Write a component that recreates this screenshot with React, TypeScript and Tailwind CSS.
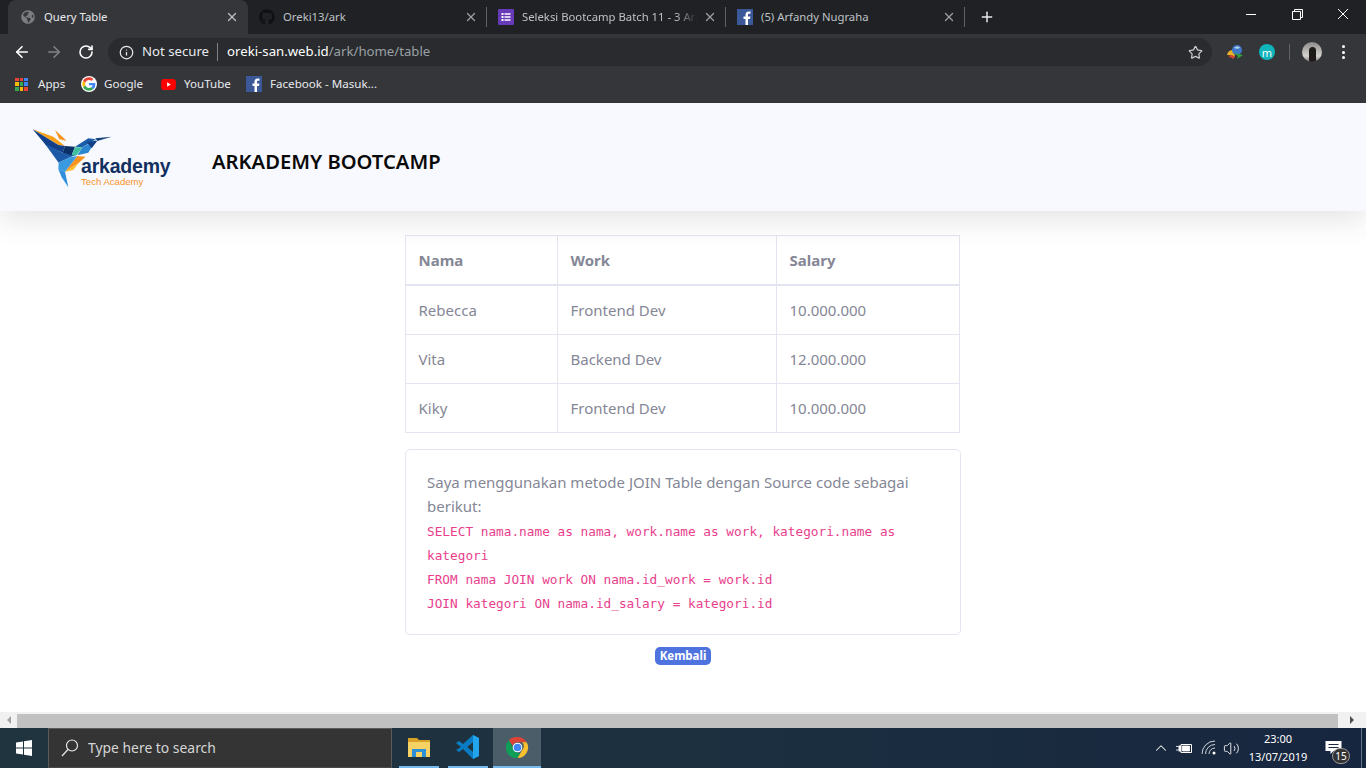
import { ArrowLeft, ArrowRight, RotateCw, Info, Star, X, Plus, ChevronUp, Volume2 } from "lucide-react";
import { FaGithub, FaGlobeAmericas } from "react-icons/fa";

const uiFont = "font-['Noto_Sans','Open_Sans',sans-serif]";

function FacebookIcon() {
  return (
    <svg viewBox="0 0 16 16" className="h-4 w-4 shrink-0">
      <rect width="16" height="16" fill="#3b5998" />
      <path d="M11 16V10h2l.4-2.500H11V6c0-.8.3-1.200 1.200-1.200h1.300V2.500c-.4 0-1.100-.1-1.900-.1C10 2.400 8.500 3.600 8.500 5.700v1.800H6.500V10h2v6z" fill="#fff" />
    </svg>
  );
}

function FormsIcon() {
  return (
    <svg viewBox="0 0 16 16" className="h-4 w-4 shrink-0">
      <rect width="16" height="16" rx="1" fill="#673ab7" />
      <path d="M3.500 4h2v2h-2zM3.500 7h2v2h-2zM3.500 10h2v2h-2zM6.500 4.300h6v1.400h-6zM6.500 7.300h6v1.400h-6zM6.500 10.300h6v1.400h-6z" fill="#fff" />
    </svg>
  );
}

function GoogleIcon() {
  return (
    <svg viewBox="0 0 48 48" className="h-4 w-4 shrink-0">
      <circle cx="24" cy="24" r="24" fill="#fff" />
      <path d="M43 24.500c0-1.400-.1-2.400-.4-3.500H24v7h10.800c-.5 2.600-2 4.700-4.300 6.100l6.600 5.100C41 36.600 43 31 43 24.500z" fill="#4285f4" />
      <path d="M24 44c5.400 0 9.900-1.800 13.100-4.800l-6.600-5.100c-1.800 1.200-4 2-6.500 2-5.100 0-9.400-3.400-10.900-8l-6.800 5.300C9.500 39.800 16.200 44 24 44z" fill="#34a853" />
      <path d="M13.100 28.100c-.8-2.600-.8-5.600 0-8.200l-6.800-5.300c-2.900 5.800-2.900 13 0 18.800z" fill="#fbbc05" />
      <path d="M24 11.900c3 0 5.400 1.100 7.200 2.800l5.900-5.800C33.800 5.900 29.400 4 24 4 16.200 4 9.500 8.200 6.300 14.600l6.800 5.300c1.500-4.600 5.800-8 10.900-8z" fill="#ea4335" />
    </svg>
  );
}

function YoutubeIcon() {
  return (
    <svg viewBox="0 0 16 12" className="h-[11px] w-[15px] shrink-0">
      <rect width="16" height="12" rx="3" fill="#f00" />
      <path d="M6.500 3.500v5L10.500 6z" fill="#fff" />
    </svg>
  );
}

function AppsIcon() {
  const colors = ["#ea4335", "#ea4335", "#4285f4", "#fbbc05", "#34a853", "#4285f4", "#34a853", "#fbbc05", "#ea4335"];
  return (
    <div className="grid h-[13px] w-[13px] shrink-0 grid-cols-3 gap-[1px]">
      {colors.map((color, i) => (
        <span key={i} style={{ background: color }} />
      ))}
    </div>
  );
}

function ChromeIcon() {
  return (
    <svg viewBox="0 0 48 48" className="h-[23px] w-[23px]">
      <path d="M24 2a22 22 0 0 1 19.100 11H24a11 11 0 0 0-10.400 7.400L6 8.800A22 22 0 0 1 24 2z" fill="#db4437" />
      <path d="M43.100 13A22 22 0 0 1 24 46l9.500-16.500a11 11 0 0 0 0-16.500z" fill="#fbc02d" />
      <path d="M24 46A22 22 0 0 1 6 8.800l9.500 16.500a11 11 0 0 0 14.500 9.200z" fill="#0f9d58" />
      <circle cx="24" cy="24" r="10" fill="#fff" />
      <circle cx="24" cy="24" r="8" fill="#4285f4" />
    </svg>
  );
}

function VscodeIcon() {
  return (
    <svg viewBox="0 0 24 26" className="h-[26px] w-[24px]">
      <path d="M17 1l6 3v18l-6 3-10-10-4 3-3-2 5-3-5-4 3-2 4 3z" fill="#0a7cc4" />
      <path d="M17 1l6 3v18l-6 3zM17 8l-6 5 6 5z" fill="#22a5ec" />
      <path d="M17 8l-6 5 6 5z" fill="#1c3340" />
    </svg>
  );
}

function FolderIcon() {
  return (
    <svg viewBox="0 0 22 20" className="h-[20px] w-[22px]">
      <path d="M0 1h9l2 2h11v4H0z" fill="#d9a128" />
      <rect y="5" width="22" height="15" fill="#f6d264" />
      <rect x="4" y="12" width="14" height="8" fill="#2d8fd5" />
      <rect x="8" y="15" width="6" height="5" fill="#f6d264" />
    </svg>
  );
}

function WindowsIcon() {
  return (
    <svg viewBox="0 0 16 16" className="h-4 w-4" fill="#fff">
      <path d="M0 2.400l7-1v6.100H0zM8 1.300L16 0v7.500H8zM0 8.500h7v6.100l-7-1zM8 8.500h8V16l-8-1.300z" />
    </svg>
  );
}

function IdmIcon() {
  return (
    <svg viewBox="0 0 18 16" className="h-4 w-[18px]">
      <path d="M1 11c1-4 4-6 7-4l1 6c-3-2-6-2-8-2z" fill="#e8b32a" />
      <path d="M2 12c2-1 5-1 7 1l-2 2c-2-2-4-2-5-3z" fill="#d8412f" />
      <circle cx="11" cy="6" r="5" fill="#3f78c9" />
      <path d="M8 4c2-2 5-2 6 0-2 1-4 1-6 0z" fill="#b7d3ee" />
      <path d="M7 9l10 2-6 4 1-3z" fill="#35a23a" />
    </svg>
  );
}

function LogoBird() {
  return (
    <svg viewBox="0 0 480 225" className="h-[75px] w-[160px]">
      <path d="M38 28L100 50L135 78L115 75z" fill="#f9a11b" />
      <path d="M38 28L115 75L135 78L128 98L78 76z" fill="#12408a" />
      <path d="M105 30L140 62L118 58z" fill="#f7931e" />
      <path d="M75 72L128 98L170 104L150 112L116 128z" fill="#1c5aa8" />
      <path d="M135 78L165 80L155 106L128 98z" fill="#0c2f66" />
      <path d="M165 82L187 82L170 106L155 106z" fill="#3fbf9f" />
      <path d="M165 80L205 55L228 58L187 82z" fill="#1a5ea8" />
      <path d="M226 55L275 50L232 63z" fill="#14427e" />
      <path d="M187 82L228 60L205 98L172 106z" fill="#2b86d0" />
      <path d="M200 65L232 62L215 85z" fill="#123f86" />
      <path d="M172 108L197 110L175 130L135 155z" fill="#f7931e" />
      <path d="M135 155L175 130L160 150z" fill="#fbc02d" />
      <path d="M116 128L150 112L172 108L135 155L115 148z" fill="#3a9ae0" />
      <path d="M115 148L135 155L145 202L125 172z" fill="#2f8fdc" />
    </svg>
  );
}

type Tab = { title: string; icon: React.ReactNode; active?: boolean; fade?: boolean };

const tabs: Tab[] = [
  { title: "Query Table", icon: <FaGlobeAmericas className="h-[14px] w-[14px] text-[#7b7d81]" />, active: true },
  { title: "Oreki13/ark", icon: <FaGithub className="h-4 w-4 text-[#101114]" /> },
  { title: "Seleksi Bootcamp Batch 11 - 3 Arkademy", icon: <FormsIcon />, fade: true },
  { title: "(5) Arfandy Nugraha", icon: <FacebookIcon /> },
];

function ChromeTab({ tab }: { tab: Tab }) {
  return (
    <div
      className={
        tab.active
          ? "flex h-full w-[240px] items-center rounded-t-[8px] bg-[#35363a] pl-[12px] pr-[9px]"
          : "flex h-full w-[239px] items-center pl-[11px]"
      }
    >
      <div className="flex w-4 shrink-0 justify-center">{tab.icon}</div>
      <span
        className={
          "ml-[8px] w-[175px] overflow-hidden whitespace-nowrap text-[11.300px] " +
          (tab.active ? "text-[#e8eaed] " : "text-[#bdc1c6] ") +
          (tab.fade ? "[mask-image:linear-gradient(to_right,black_88%,transparent)]" : "")
        }
      >
        {tab.title}
      </span>
      <X className={"ml-auto h-[14px] w-[14px] " + (tab.active ? "text-[#bdc1c6]" : "text-[#9aa0a6]")} strokeWidth={2.2} />
      {!tab.active && <div className="ml-[8px] h-[20px] w-px shrink-0 bg-[#5f6368]" />}
    </div>
  );
}

const bookmarks = [
  { label: "Apps", icon: <AppsIcon />, gap: "gap-[10px]", width: "w-[66px]" },
  { label: "Google", icon: <GoogleIcon />, gap: "gap-[7px]", width: "w-[80px]" },
  { label: "YouTube", icon: <YoutubeIcon />, gap: "gap-[8px]", width: "w-[85px]" },
  { label: "Facebook - Masuk...", icon: <FacebookIcon />, gap: "gap-[8px]", width: "w-[140px]" },
];

const rows = [
  ["Rebecca", "Frontend Dev", "10.000.000", "h-[50px]"],
  ["Vita", "Backend Dev", "12.000.000", "h-[49px]"],
  ["Kiky", "Frontend Dev", "10.000.000", "h-[49px]"],
];

export default function App() {
  return (
    <div className={"flex h-screen w-full flex-col overflow-hidden bg-white " + uiFont}>
      {/* tab strip */}
      <div className="flex h-[34px] shrink-0 items-stretch bg-[#202124] pl-[8px]">
        {tabs.map((tab) => (
          <ChromeTab key={tab.title} tab={tab} />
        ))}
        <div className="ml-[14px] flex items-center">
          <Plus className="h-[16px] w-[16px] text-[#e8eaed]" strokeWidth={2.2} />
        </div>
        <div className="ml-auto flex items-center pb-[6px] pr-[18px]">
          <svg viewBox="0 0 10 1" className="h-px w-[10px]">
            <rect width="10" height="1" fill="#fff" />
          </svg>
          <svg viewBox="0 0 11 11" className="ml-[36px] h-[11px] w-[11px]" fill="none" stroke="#fff">
            <path d="M.5 2.500h8v8h-8zM2.500 2.500v-2h8v8h-2" />
          </svg>
          <svg viewBox="0 0 10 10" className="ml-[35px] h-[10px] w-[10px]" stroke="#fff" strokeWidth="1">
            <path d="M0 0l10 10M10 0L0 10" />
          </svg>
        </div>
      </div>

      {/* toolbar */}
      <div className="flex h-[32px] shrink-0 items-center bg-[#35363a] pl-[13px] pt-[4px]">
        <ArrowLeft className="h-[18px] w-[18px] text-white" strokeWidth={2.2} />
        <ArrowRight className="ml-[14px] h-[18px] w-[18px] text-[#7f8286]" strokeWidth={2.2} />
        <RotateCw className="ml-[15px] h-[16px] w-[16px] text-white" strokeWidth={2.4} />
        <div className="ml-[14px] flex h-[28px] w-[1104px] items-center rounded-full bg-[#292b2e] pl-[11px] pr-[9px]">
          <Info className="h-[15px] w-[15px] text-[#e8eaed]" strokeWidth={2} />
          <span className="ml-[8px] text-[13.200px] text-[#e8eaed]">Not secure</span>
          <div className="ml-[8px] h-[18px] w-px bg-[#7d8084]" />
          <span className="ml-[9px] text-[13.200px] text-white">
            oreki-san.web.id<span className="text-[#9aa0a6]">/ark/home/table</span>
          </span>
          <Star className="ml-auto h-[15px] w-[15px] text-[#c8cacc]" strokeWidth={2} />
        </div>
        <div className="ml-[14px]">
          <IdmIcon />
        </div>
        <div className="ml-[15px] flex h-4 w-4 items-center justify-center rounded-full bg-[#0fb5ba] text-[11px] leading-none text-white">
          m
        </div>
        <div className="ml-[14px] h-[16px] w-px bg-[#5f6368]" />
        <div className="ml-[12px] flex h-5 w-5 items-end justify-center overflow-hidden rounded-full bg-[linear-gradient(to_bottom,#8d8b87,#d5d3cf_70%,#77746f)]">
          <div className="h-[15px] w-[7px] rounded-t-full bg-[#1d1a18]" />
        </div>
        <div className="ml-[20px] flex flex-col gap-[2.500px]">
          <span className="h-[3px] w-[3px] rounded-full bg-white" />
          <span className="h-[3px] w-[3px] rounded-full bg-white" />
          <span className="h-[3px] w-[3px] rounded-full bg-white" />
        </div>
      </div>

      {/* bookmarks */}
      <div className="flex h-[37px] shrink-0 items-start bg-[#35363a] pl-[15px] pt-[8px]">
        {bookmarks.map((b) => (
          <div key={b.label} className={"flex h-[20px] items-center text-[11.600px] text-[#e8eaed] " + b.gap + " " + b.width}>
            {b.icon}
            <span className="whitespace-nowrap">{b.label}</span>
          </div>
        ))}
      </div>

      {/* page */}
      <div className="min-h-0 flex-1 overflow-hidden">
        <header className="relative flex h-[108px] items-center bg-[#f8f9fe] shadow-[0_8px_28px_rgba(58,59,69,0.14)]">
          <div className="relative ml-[20px] h-[75px] w-[160px]">
            <LogoBird />
            <span className="absolute left-[61px] top-[39px] font-['Liberation_Sans',sans-serif] text-[19.500px] font-bold leading-[15px] tracking-[-0.2px] text-[#12305f]">
              arkademy
            </span>
            <span className="absolute left-[61px] top-[57px] font-['Liberation_Sans',sans-serif] text-[9.600px] leading-none text-[#f7931e]">
              Tech Academy
            </span>
          </div>
          <h1 className="ml-[32px] mt-[8px] text-[20.200px] font-semibold text-[#0a0a0a]">ARKADEMY BOOTCAMP</h1>
        </header>

        <main className="flex flex-col items-center pt-[24px]">
          <table className="ml-[-2px] w-[554px] table-fixed border-collapse text-[15px] text-[#858796]">
            <colgroup>
              <col className="w-[152px]" />
              <col className="w-[219px]" />
              <col className="w-[183px]" />
            </colgroup>
            <thead>
              <tr className="h-[49px]">
                {["Nama", "Work", "Salary"].map((h) => (
                  <th key={h} className="border border-b-2 border-[#e3e6f0] px-[13px] text-left font-bold">
                    {h}
                  </th>
                ))}
              </tr>
            </thead>
            <tbody>
              {rows.map((row) => (
                <tr key={row[0]} className={row[3]}>
                  {row.slice(0, 3).map((cell, i) => (
                    <td key={i} className="border border-[#e3e6f0] px-[13px]">
                      {cell}
                    </td>
                  ))}
                </tr>
              ))}
            </tbody>
          </table>

          <div className="mt-[16px] w-[556px] rounded-[5px] border border-[#e3e6f0] px-[21px] pb-[18px] pt-[20px] text-[15px] leading-[24px] text-[#858796]">
            <p>Saya menggunakan metode JOIN Table dengan Source code sebagai berikut:</p>
            <code className="block pt-[2px] font-['DejaVu_Sans_Mono',monospace] text-[12.750px] leading-[24px] text-[#e83e8c]">
              SELECT nama.name as nama, work.name as work, kategori.name as kategori
              <br />
              FROM nama JOIN work ON nama.id_work = work.id
              <br />
              JOIN kategori ON nama.id_salary = kategori.id
            </code>
          </div>

          <button className="mt-[12px] flex h-[18px] w-[56px] items-center justify-center rounded-[5px] bg-[#4e73df] text-[11.500px] font-bold text-white">
            Kembali
          </button>
        </main>
      </div>

      {/* horizontal scrollbar */}
      <div className="flex h-[16px] shrink-0 items-center bg-[#f1f1f1]">
        <div className="flex w-[17px] justify-center">
          <div className="h-0 w-0 border-y-[4px] border-r-[4px] border-y-transparent border-r-[#a3a3a3]" />
        </div>
        <div className="h-[14px] w-[1321px] self-end bg-[#c1c1c1]" />
        <div className="flex flex-1 justify-center">
          <div className="h-0 w-0 border-y-[4px] border-l-[4px] border-y-transparent border-l-[#505050]" />
        </div>
      </div>

      {/* taskbar */}
      <div className="flex h-[40px] shrink-0 items-stretch bg-[linear-gradient(to_right,#20343f,#1c3040_50%,#17263f)]">
        <div className="flex w-[48px] items-center justify-center">
          <WindowsIcon />
        </div>
        <div className="flex w-[344px] items-center border border-[#5b5b5b] border-b-[#4a4a4a] bg-[#343434] pl-[12px]">
          <svg viewBox="0 0 18 18" className="h-[18px] w-[18px]" fill="none" stroke="#e8e8e8" strokeWidth="1.200">
            <circle cx="11" cy="6.500" r="5.500" />
            <path d="M7 10.500L1 17" />
          </svg>
          <span className="ml-[9px] text-[13.900px] text-[#d6d6d6]">Type here to search</span>
        </div>
        <div className="ml-[7px] flex w-[40px] items-center justify-center border-b-2 border-[#76b9ed]">
          <FolderIcon />
        </div>
        <div className="ml-[9px] flex w-[40px] items-center justify-center border-b-2 border-[#76b9ed]">
          <VscodeIcon />
        </div>
        <div className="ml-[5px] flex w-[48px] items-center justify-center border-b-2 border-[#76b9ed] bg-[#4b5d68]">
          <ChromeIcon />
        </div>
        <div className="ml-auto flex items-center text-[#f2f2f2]">
          <ChevronUp className="h-[18px] w-[18px]" strokeWidth={1.4} />
          <svg viewBox="0 0 16 11" className="ml-[6px] h-[11px] w-4" fill="none" stroke="#fff">
            <path d="M5 1.500h10.500v8H5z" />
            <path d="M6.500 3h7v5h-7zM0 3.500h2.500M0 7h2.500" fill="#fff" stroke="#fff" strokeWidth="0.800" />
            <path d="M2.500 2.500h2.500v6H2.500z" fill="#fff" stroke="none" />
          </svg>
          <svg viewBox="0 0 16 16" className="ml-[9px] h-4 w-4" fill="none" stroke="#cfd3d8" strokeWidth="1">
            <path d="M1 14A13 13 0 0 1 14 1M4.500 14A9.500 9.500 0 0 1 14 4.500M8 14A6 6 0 0 1 14 8" />
            <circle cx="13" cy="13" r="1.500" fill="#fff" stroke="none" />
          </svg>
          <Volume2 className="ml-[6px] h-[17px] w-[17px]" strokeWidth={1.3} />
          <div className="flex w-[76px] flex-col items-center text-[11px] text-white">
            <span className="leading-[18px]">23:00</span>
            <span className="leading-[18px]">13/07/2019</span>
          </div>
          <div className="relative ml-[9px] mt-[8px] h-[23px] w-[25px]">
            <svg viewBox="0 0 16 13" className="h-[13px] w-[17px]" fill="#fff">
              <path d="M0 0h16v10H8l-3 3v-3H0z" />
              <path d="M3 3h10v1H3zM3 6h10v1H3z" fill="#1a2b40" />
            </svg>
            <span className="absolute bottom-0 right-0 flex h-[16px] w-[18px] items-center justify-center rounded-full border border-[#9a9a9a] bg-[#333] text-[10px] leading-none text-white">
              15
            </span>
          </div>
          <div className="ml-[11px] h-full w-px bg-[#64748a]" />
          <div className="w-[4px]" />
        </div>
      </div>
    </div>
  );
}
